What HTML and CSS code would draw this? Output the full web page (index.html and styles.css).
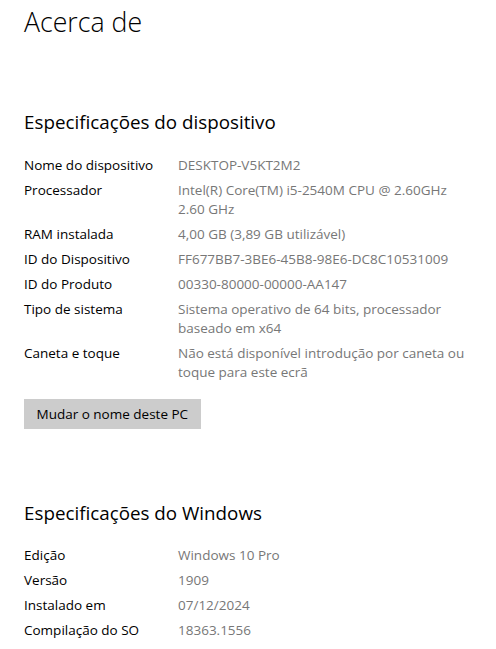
FILE: index.html
```html
<!DOCTYPE html>
<html lang="pt">
<head>
<meta charset="utf-8">
<title>Acerca de</title>
<link rel="stylesheet" href="styles.css">
</head>
<body>
<main class="page">
  <h1 class="title">Acerca de</h1>

  <section class="section section-device">
    <h2 class="section-title">Especificações do dispositivo</h2>
    <dl class="specs">
      <dt>Nome do dispositivo</dt><dd>DESKTOP-V5KT2M2</dd>
      <dt>Processador</dt><dd>Intel(R) Core(TM) i5-2540M CPU @ 2.60GHz<br>2.60 GHz</dd>
      <dt>RAM instalada</dt><dd>4,00 GB (3,89 GB utilizável)</dd>
      <dt>ID do Dispositivo</dt><dd>FF677BB7-3BE6-45B8-98E6-DC8C10531009</dd>
      <dt>ID do Produto</dt><dd>00330-80000-00000-AA147</dd>
      <dt>Tipo de sistema</dt><dd>Sistema operativo de 64 bits, processador<br>baseado em x64</dd>
      <dt>Caneta e toque</dt><dd>Não está disponível introdução por caneta ou<br>toque para este ecrã</dd>
    </dl>
    <button class="btn" type="button">Mudar o nome deste PC</button>
  </section>

  <section class="section section-windows">
    <h2 class="section-title">Especificações do Windows</h2>
    <dl class="specs">
      <dt>Edição</dt><dd>Windows 10 Pro</dd>
      <dt>Versão</dt><dd>1909</dd>
      <dt>Instalado em</dt><dd>07/12/2024</dd>
      <dt>Compilação do SO</dt><dd>18363.1556</dd>
    </dl>
  </section>
</main>
</body>
</html>
```
FILE: styles.css
```css
html, body {
  margin: 0;
  padding: 0;
  background: #ffffff;
}

body {
  font-family: "Open Sans", "Noto Sans", sans-serif;
  color: #000000;
}

.page {
  padding: 6px 24px 0 24px;
}

.title {
  margin: 0;
  font-size: 26.7px;
  line-height: 32px;
  font-weight: 300;
}

.section-title {
  margin: 0;
  font-size: 18.8px;
  line-height: 24px;
  font-weight: 400;
}

.section-device {
  margin-top: 72px;
}

.section-windows {
  margin-top: 72px;
}

.specs {
  margin: 22px 0 0 0;
  display: grid;
  grid-template-columns: 154px auto;
  row-gap: 6px;
  font-size: 13.5px;
  line-height: 19px;
}

.specs dt {
  margin: 0;
  color: #000000;
}

.specs dd {
  margin: 0;
  color: #777777;
}

.section-windows .specs {
  margin-top: 21px;
}

.btn {
  display: block;
  margin-top: 17px;
  height: 30px;
  padding: 0 12.5px;
  border: none;
  background: #cccccc;
  color: #000000;
  font-family: inherit;
  font-size: 13.5px;
  line-height: 30px;
}
```
